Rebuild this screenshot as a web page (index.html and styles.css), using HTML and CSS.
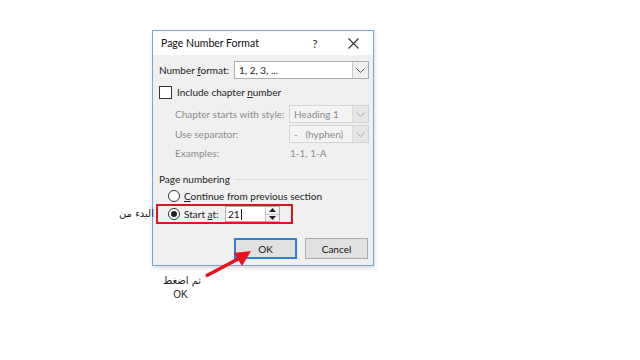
FILE: index.html
```html
<!DOCTYPE html>
<html lang="en">

<head>
    <meta charset="UTF-8">
    <meta name="viewport" content="width=device-width, initial-scale=1.0">
    <title>Page Number Format</title>
    <link rel="stylesheet" href="styles.css">
</head>

<body>
    <div class="stage">
        <div class="dialog">
            <div class="titlebar">
                <span class="title">Page Number Format</span>
                <span class="help">?</span>
                <span class="close">
                    <svg width="11" height="11" viewBox="0 0 11 11">
                        <path d="M0.5 0.5 L10.5 10.5 M10.5 0.5 L0.5 10.5" stroke="#333" stroke-width="1.1" fill="none" />
                    </svg>
                </span>
            </div>

            <div class="body">
                <div class="row">
                    <span class="label">Number <u>f</u>ormat:</span>
                    <div class="select wide">
                        <span>1, 2, 3, ...</span>
                        <span class="arrow">
                            <svg width="9" height="5" viewBox="0 0 9 5"><path d="M0.5 0.5 L4.5 4.5 L8.5 0.5" stroke="#555" fill="none" /></svg>
                        </span>
                    </div>
                </div>

                <div class="check-row">
                    <span class="checkbox"></span>
                    <span>Include chapter <u>n</u>umber</span>
                </div>

                <div class="sub">
                    <div class="row disabled">
                        <span class="sub-label">Chapter starts with style:</span>
                        <div class="select small off">
                            <span>Heading 1</span>
                            <span class="arrow">
                                <svg width="9" height="5" viewBox="0 0 9 5"><path d="M0.5 0.5 L4.5 4.5 L8.5 0.5" stroke="#aaa" fill="none" /></svg>
                            </span>
                        </div>
                    </div>
                    <div class="row disabled">
                        <span class="sub-label">Use separator:</span>
                        <div class="select small off">
                            <span>-&nbsp;&nbsp;&nbsp;(hyphen)</span>
                            <span class="arrow">
                                <svg width="9" height="5" viewBox="0 0 9 5"><path d="M0.5 0.5 L4.5 4.5 L8.5 0.5" stroke="#aaa" fill="none" /></svg>
                            </span>
                        </div>
                    </div>
                    <div class="row disabled examples">
                        <span class="sub-label">Examples:</span>
                        <span class="example-value">1-1, 1-A</span>
                    </div>
                </div>

                <div class="group-title">
                    <span>Page numbering</span>
                    <span class="line"></span>
                </div>

                <div class="radio-row">
                    <span class="radio"></span>
                    <span><u>C</u>ontinue from previous section</span>
                </div>

                <div class="highlight">
                    <span class="radio on"></span>
                    <span class="start-label">Start <u>a</u>t:</span>
                    <div class="spin">
                        <span class="spin-value">21<span class="caret"></span></span>
                        <span class="spin-btns">
                            <span class="spin-btn">
                                <svg width="7" height="4" viewBox="0 0 7 4"><path d="M0 4 L3.5 0 L7 4 Z" fill="#222" /></svg>
                            </span>
                            <span class="spin-btn">
                                <svg width="7" height="4" viewBox="0 0 7 4"><path d="M0 0 L3.5 4 L7 0 Z" fill="#222" /></svg>
                            </span>
                        </span>
                    </div>
                </div>

                <div class="buttons">
                    <button class="btn default">OK</button>
                    <button class="btn">Cancel</button>
                </div>
            </div>
        </div>

        <!-- notes drawn over the screenshot -->
        <span class="note note-start" dir="rtl">البدء من</span>
        <div class="note note-ok">
            <span dir="rtl">ثم اضغط</span>
            <span>OK</span>
        </div>
        <svg class="pointer" width="60" height="40" viewBox="0 0 60 40">
            <path d="M8 34 L42 16" stroke="#e8141c" stroke-width="3.5" fill="none" />
            <path d="M53 9 L36 11 L44 24 Z" fill="#e8141c" />
        </svg>
    </div>
</body>

</html>
```

FILE: styles.css
```css
body {
    margin: 0;
    background-color: #fff;
    font-family: Lato, "Noto Sans", sans-serif;
    font-size: 10px;
    color: #222;
}

.stage {
    position: relative;
    width: 640px;
    height: 360px;
    padding: 30px 0 0 152px;
    box-sizing: border-box;
}

.dialog {
    width: 220px;
    border: 1px solid #7ba4d4;
    background-color: #f0f0f0;
    box-shadow: 1px 2px 4px rgba(0, 0, 0, 0.15);
    white-space: nowrap;
}

.titlebar {
    height: 24px;
    background-color: #fff;
    display: flex;
    align-items: center;
    padding-left: 8px;
}

.title {
    flex: 1;
    font-size: 10.5px;
    color: #111;
}

.help {
    width: 16px;
    font-size: 11px;
    color: #222;
    text-align: center;
    margin-right: 22px;
}

.close {
    width: 16px;
    display: flex;
    justify-content: center;
    margin-right: 12px;
}

.body {
    padding: 5px 5px 6px 6px;
}

.row {
    display: flex;
    align-items: center;
    height: 20px;
}

.label {
    width: 75px;
    flex-shrink: 0;
}

.select {
    height: 18px;
    display: flex;
    align-items: center;
    border: 1px solid #abadb3;
    background-color: #fff;
    box-sizing: border-box;
    padding-left: 4px;
    flex-shrink: 0;
}

.select span:first-child {
    flex: 1;
}

.select.wide {
    width: 135px;
}

.select.small {
    width: 80px;
}

.select.off {
    background-color: #f4f4f4;
    border-color: #d4d4d4;
    color: #8a8a8a;
}

.arrow {
    width: 15px;
    height: 16px;
    display: flex;
    align-items: center;
    justify-content: center;
    background-color: #f0f0f0;
    border-left: 1px solid #c8c8c8;
}

.select.off .arrow {
    background-color: #e6e6e6;
    border-left-color: #d9d9d9;
}

.check-row {
    display: flex;
    align-items: center;
    gap: 5px;
    height: 16px;
    margin-top: 4px;
}

.checkbox {
    width: 11px;
    height: 11px;
    border: 1px solid #333;
    background-color: #fff;
}

.sub {
    margin-top: 4px;
    padding-left: 16px;
}

.disabled {
    color: #8d8d8d;
}

.sub-label {
    width: 114px;
    flex-shrink: 0;
}

.examples {
    height: 18px;
}

.example-value {
    margin-left: 1px;
}

.group-title {
    display: flex;
    align-items: center;
    gap: 4px;
    margin-top: 9px;
    height: 16px;
}

.group-title .line {
    flex: 1;
    height: 1px;
    background-color: #dcdcdc;
}

.radio-row {
    display: flex;
    align-items: center;
    gap: 4px;
    height: 16px;
    margin-left: 9px;
    margin-top: 1px;
}

.radio {
    width: 10px;
    height: 10px;
    border: 1px solid #333;
    border-radius: 50%;
    background-color: #fff;
    position: relative;
    flex-shrink: 0;
}

.radio.on::after {
    content: "";
    position: absolute;
    left: 2px;
    top: 2px;
    width: 6px;
    height: 6px;
    border-radius: 50%;
    background-color: #222;
}

.highlight {
    width: 137px;
    height: 20px;
    border: 2px solid #e2141c;
    box-sizing: border-box;
    margin-left: -3px;
    display: flex;
    align-items: center;
    padding-left: 10px;
}

.start-label {
    margin-left: 4px;
    width: 41px;
    flex-shrink: 0;
}

.spin {
    width: 55px;
    height: 16px;
    display: flex;
    border: 1px solid #abadb3;
    background-color: #fff;
    box-sizing: border-box;
    flex-shrink: 0;
}

.spin-value {
    flex: 1;
    padding-left: 2px;
    display: flex;
    align-items: center;
    color: #111;
}

.caret {
    width: 1px;
    height: 11px;
    background-color: #111;
    margin-left: 1px;
}

.spin-btns {
    width: 13px;
    display: flex;
    flex-direction: column;
    border-left: 1px solid #c8c8c8;
}

.spin-btn {
    flex: 1;
    display: flex;
    align-items: center;
    justify-content: center;
    background-color: #f4f4f4;
}

.spin-btn + .spin-btn {
    border-top: 1px solid #c8c8c8;
}

.buttons {
    display: flex;
    justify-content: flex-end;
    gap: 8px;
    margin-top: 14px;
}

.btn {
    width: 63px;
    height: 21px;
    font-family: inherit;
    font-size: 10px;
    color: #111;
    background-color: #e1e1e1;
    border: 1px solid #adadad;
    padding: 0;
}

.btn.default {
    border: 2px solid #2f80d0;
}

.note {
    position: absolute;
    font-family: "DejaVu Sans", "Noto Sans", sans-serif;
    font-size: 10px;
    color: #222;
}

.note-start {
    left: 119px;
    top: 208px;
}

.note-ok {
    left: 159px;
    top: 274px;
    width: 46px;
    display: flex;
    flex-direction: column;
    align-items: center;
    line-height: 14px;
}

.note-ok span:last-child {
    font-family: "Liberation Sans", sans-serif;
    font-size: 10px;
    margin-left: -3px;
}

.pointer {
    position: absolute;
    left: 198px;
    top: 242px;
}
```
